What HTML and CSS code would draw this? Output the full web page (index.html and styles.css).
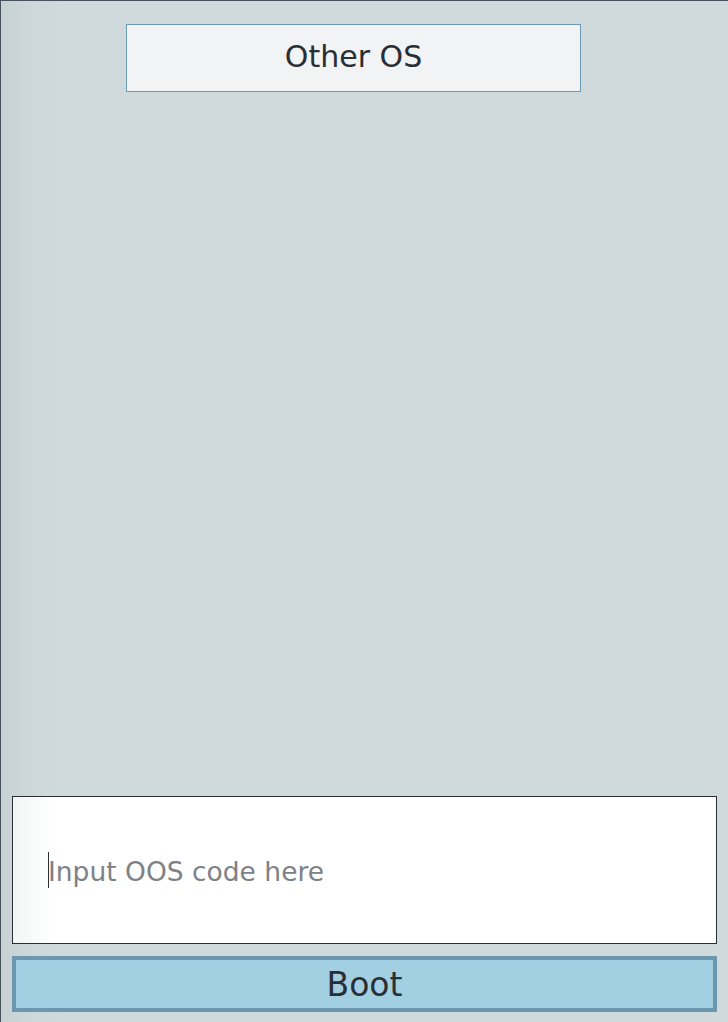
FILE: index.html
```html
<!DOCTYPE html>
<html lang="en">
<head>
<meta charset="utf-8">
<title>Other OS</title>
<link rel="stylesheet" href="styles.css">
</head>
<body>
<div class="app">
  <div class="title-box">Other OS</div>
  <div class="spacer"></div>
  <label class="code-field">
    <span class="caret"></span>
    <input class="code-input" type="text" placeholder="Input OOS code here">
  </label>
  <button class="boot-btn" type="button">Boot</button>
</div>
</body>
</html>
```

FILE: styles.css
```css
* { box-sizing: border-box; }
html, body { margin: 0; padding: 0; }
body {
  width: 728px;
  height: 1022px;
  overflow: hidden;
  font-family: "DejaVu Sans", Verdana, sans-serif;
  color: #2a2e35;
}
.app {
  height: 1022px;
  display: flex;
  flex-direction: column;
  border-top: 1px solid #46525c;
  border-left: 1px solid #46525c;
  background: linear-gradient(to right, #c8d2d4 0, #ced7da 30px, #d0d9dc 60px, #d0d9dc 100%);
  padding: 23px 11px 10px 11px;
}
.title-box {
  align-self: flex-start;
  margin-left: 114px;
  width: 455px;
  height: 68px;
  border: 1px solid #6a9ab4;
  background: #f2f3f5;
  display: flex;
  align-items: center;
  justify-content: center;
  font-size: 30px;
  padding-bottom: 3px;
  color: #2a2e35;
}
.spacer { flex: 1; }
.code-field {
  position: relative;
  display: block;
  width: 705px;
  height: 148px;
  border: 1px solid #2a2e35;
  background: linear-gradient(to right, #f3f4f4 0, #ffffff 40px);
}
.code-input {
  display: block;
  width: 100%;
  height: 100%;
  border: 0;
  outline: none;
  background: transparent;
  padding: 2px 0 0 35px;
  font-family: "DejaVu Sans", Verdana, sans-serif;
  font-size: 26.5px;
  color: #2a2e35;
  caret-color: transparent;
}
.code-input::placeholder { color: #7e8186; opacity: 1; }
.caret {
  position: absolute;
  left: 35px;
  top: 55px;
  width: 1px;
  height: 36px;
  background: #2a2e35;
}
.boot-btn {
  margin-top: 12px;
  width: 705px;
  height: 56px;
  border: 4px solid #6b98ae;
  background: #a3cfe3;
  font-family: "DejaVu Sans", Verdana, sans-serif;
  font-size: 33px;
  color: #2a2e35;
  padding: 0 0 0 0;
  line-height: 1;
}
```
